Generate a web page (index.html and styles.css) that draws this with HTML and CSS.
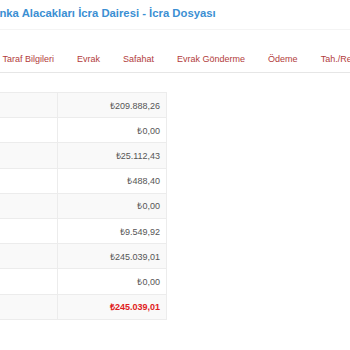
FILE: index.html
```html
<!DOCTYPE html>
<html lang="tr">
<head>
  <meta charset="UTF-8">
  <meta name="viewport" content="width=device-width, initial-scale=1.0">
  <title>İcra Dosyası</title>
  <link rel="stylesheet" href="styles.css">
</head>
<body>
  <div class="page">
    <!-- Başlık -->
    <div class="panel-heading">
      <h3 class="panel-title">Banka Alacakları İcra Dairesi - İcra Dosyası</h3>
    </div>

    <!-- Sekmeler -->
    <ul class="nav-tabs">
      <li><a href="#">Taraf Bilgileri</a></li>
      <li><a href="#">Evrak</a></li>
      <li><a href="#">Safahat</a></li>
      <li><a href="#">Evrak Gönderme</a></li>
      <li><a href="#">Ödeme</a></li>
      <li><a href="#">Tah./Reddiyat</a></li>
    </ul>

    <!-- Hesap tablosu -->
    <table class="summary">
      <tr><td class="label"></td><td class="value">₺209.888,26</td></tr>
      <tr><td class="label"></td><td class="value">₺0,00</td></tr>
      <tr><td class="label"></td><td class="value">₺25.112,43</td></tr>
      <tr><td class="label"></td><td class="value">₺488,40</td></tr>
      <tr><td class="label"></td><td class="value">₺0,00</td></tr>
      <tr><td class="label"></td><td class="value">₺9.549,92</td></tr>
      <tr><td class="label"></td><td class="value">₺245.039,01</td></tr>
      <tr><td class="label"></td><td class="value">₺0,00</td></tr>
      <tr class="total"><td class="label"></td><td class="value">₺245.039,01</td></tr>
    </table>
  </div>
</body>
</html>
```

FILE: styles.css
```css
body {
  margin: 0;
  font-family: "Liberation Sans", Arial, sans-serif;
  background-color: #fff;
  overflow: hidden;
}
.page {
  width: 350px;
  overflow: hidden;
}
/* Başlık alanı */
.panel-heading {
  height: 29px;
  border-bottom: 1px solid #f4f4f4;
  white-space: nowrap;
}
.panel-title {
  margin: 0 0 0 -15px;
  padding-top: 7px;
  font-size: 11.3px;
  font-weight: bold;
  color: #3b8fd3;
}
/* Sekmeler */
.nav-tabs {
  list-style: none;
  display: flex;
  margin: 0 0 0 -9px;
  padding: 16px 0 0 0;
  border-bottom: 1px solid #e6e6e6;
  white-space: nowrap;
  width: 420px;
}
.nav-tabs a {
  display: block;
  padding: 8px 11.5px;
  font-size: 9px;
  color: #b23c3c;
  text-decoration: none;
}
/* Tablo */
.summary {
  border-collapse: collapse;
  margin-top: 19px;
  font-size: 9px;
  color: #555;
}
.summary td {
  height: 24.2px;
  padding: 0 6px;
  border: 1px solid #ececec;
  border-left: none;
}
.summary .label {
  width: 45px;
}
.summary .value {
  width: 96px;
  text-align: right;
  border-right: 1px solid #ececec;
}
.summary tr:nth-child(odd) td {
  background-color: #f9f9f9;
}
.summary .total .value {
  color: #e02020;
  font-weight: bold;
}
```
